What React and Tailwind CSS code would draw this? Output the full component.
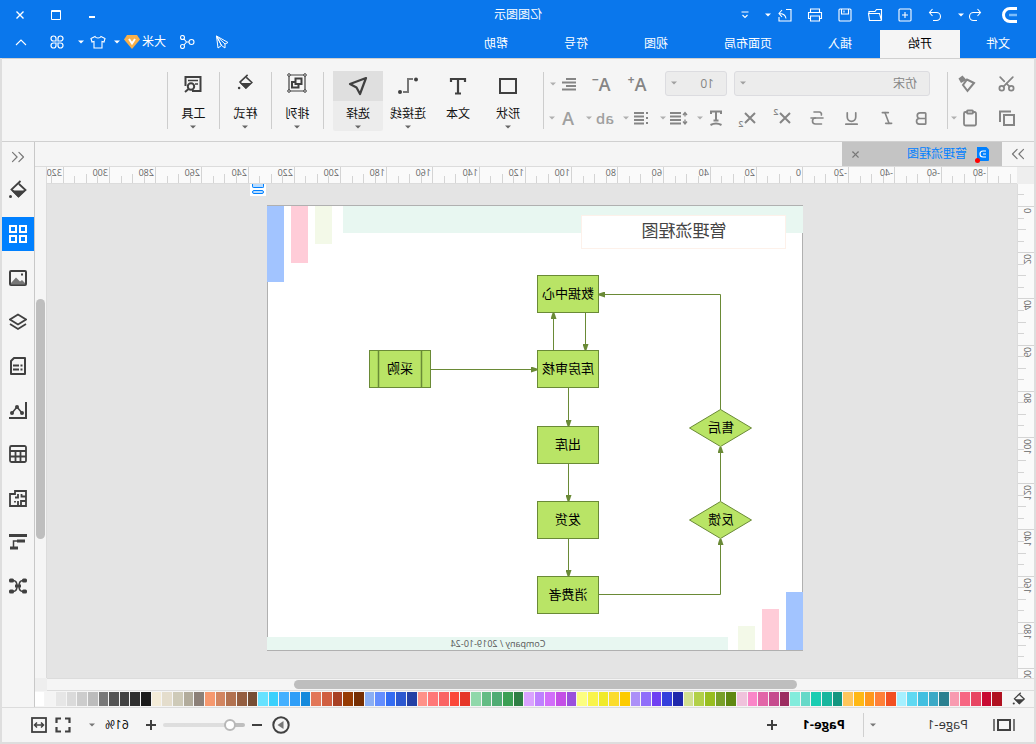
import React, { useState } from 'react';
import {
  Bold,
  Italic,
  Underline,
  Strikethrough,
  Scissors,
  Clipboard,
  ChevronsLeft,
  ChevronsRight,
  X,
} from 'lucide-react';

const menuTabs = ['文件', '开始', '插入', '页面布局', '视图', '符号', '帮助'];

const palette = [
  '#b01120', '#c80a32', '#e84562', '#f76682', '#f89bb0',
  '#2b8090', '#3ba9c6', '#42bfe0', '#60d9f2', '#a6f0ff',
  '#f25022', '#ff8038', '#ff981c', '#ffb814', '#ffc65c',
  '#139680', '#18b69e', '#1acdb2', '#66d9c8', '#82ecdc',
  '#9c2c60', '#c64c8e', '#e266a8', '#fa86c8', '#f0c2dc',
  '#5f8811', '#78a028', '#98be20', '#b2d048', '#d2e090',
  '#1f28ac', '#343fdc', '#7040f2', '#906efa', '#ac90f8',
  '#fdcb00', '#fbdc2c', '#f0ea2a', '#f9f44c', '#fcfe80',
  '#9a50dc', '#c44fe6', '#d26efa', '#bf80ff', '#daa2ff',
  '#2f7f44', '#3ca054', '#50ac74', '#64bc84', '#90d8aa',
  '#e63628', '#fb483a', '#fa6464', '#ff7878', '#ff9188',
  '#2440a4', '#2c58d0', '#346cf2', '#648eff', '#8aaef4',
  '#762e02', '#963a02', '#a84024', '#d05e40', '#e27658',
  '#168adc', '#2e9ef8', '#44b0ff', '#3ad0fc', '#66e2ff',
  '#764e34', '#945e40', '#b27250', '#d28560', '#f6986e',
  '#8c8078', '#b2ac9c', '#cecab8', '#e4ddcc', '#f4ecd8',
  '#1a1a1a', '#2e2e2e', '#424242', '#545454', '#787878',
  '#bcbcbc', '#cccccc', '#dadada', '#e6e6e6', '#f4f4f4', '#ffffff',
];

function Icon({ w = 18, h = 18, sw = 1.5, className = '', children }) {
  return (
    <svg
      width={w}
      height={h}
      viewBox={`0 0 ${w} ${h}`}
      fill="none"
      stroke="currentColor"
      strokeWidth={sw}
      className={`shrink-0 ${className}`}
      aria-hidden="true"
    >
      {children}
    </svg>
  );
}

function Caret({ className = '' }) {
  return (
    <Icon w={6} h={4} className={className}>
      <path d="M0 0.5h6L3 3.5z" fill="currentColor" stroke="none" />
    </Icon>
  );
}

function IconButton({ label, className = '', children, ...rest }) {
  return (
    <button
      type="button"
      aria-label={label}
      className={`flex h-6 w-5 shrink-0 items-center justify-center ${className}`}
      {...rest}
    >
      {children}
    </button>
  );
}

function BucketIcon({ w = 20 }) {
  return (
    <svg width={w} height={w} viewBox="0 0 20 20" fill="none" stroke="currentColor" strokeWidth="1.8" aria-hidden="true">
      <path d="M7.5 1L16.5 9.5L9.5 16.5L2.5 10L9 4" />
      <path d="M3 10.5h13.5l-7 7z" fill="currentColor" stroke="none" />
      <circle cx="17.5" cy="16.5" r="1.5" fill="currentColor" stroke="none" />
    </svg>
  );
}

/* ---------- title bar ---------- */

function QuickAccess() {
  return (
    <div className="flex items-center">
      <IconButton label="撤销">
        <Icon w={14} h={14} sw={1.1}>
          <path d="M4.5 1L1.5 4.5l3 3.5M1.5 4.5h7a4 4 0 0 1 0 8H5" />
        </Icon>
      </IconButton>
      <Caret className="mx-px" />
      <IconButton label="重做" className="ml-3">
        <Icon w={14} h={14} sw={1.1}>
          <path d="M9.5 1l3 3.5-3 3.5M12.5 4.5h-7a4 4 0 0 0 0 8H9" />
        </Icon>
      </IconButton>
      <IconButton label="新建" className="ml-2.5">
        <Icon w={14} h={14} sw={1.1}>
          <rect x="1" y="1" width="12" height="12" rx="1" />
          <path d="M7 4v6M4 7h6" />
        </Icon>
      </IconButton>
      <IconButton label="打开" className="ml-2.5">
        <Icon w={16} h={14} sw={1.1}>
          <path d="M1.5 12.5v-11h5l1.5 2h6v2M1.5 12.5h12l1-7h-11l-2 7" />
        </Icon>
      </IconButton>
      <IconButton label="保存" className="ml-2.5">
        <Icon w={14} h={14} sw={1.1}>
          <rect x="1" y="1" width="12" height="12" rx="1" />
          <path d="M3.5 1v5h7V1M8 2.5v2" />
        </Icon>
      </IconButton>
      <IconButton label="打印" className="ml-2.5">
        <Icon w={16} h={14} sw={1.1}>
          <path d="M3.5 4V1h9v3M3.5 10.5h-2v-6h13v6h-2M3.5 8h9v5h-9z" />
        </Icon>
      </IconButton>
      <IconButton label="导出" className="ml-2.5">
        <Icon w={14} h={14} sw={1.1}>
          <path d="M6 1.5H1V13h12V9M13 5.5C9 5.5 6.5 7 6 10.5M10 2l3 3.5L10 9" />
        </Icon>
      </IconButton>
      <Caret className="ml-1" />
      <IconButton label="更多" className="ml-2.5">
        <Icon w={8} h={8} sw={1.1}>
          <path d="M0.5 1h7M1.5 4L4 6.5 6.5 4" />
        </Icon>
      </IconButton>
    </div>
  );
}

function TitleBar() {
  return (
    <header className="relative bg-[#0a77ec] text-white">
      <div className="flex h-[30px] items-center pr-2.5">
        <Icon w={15} h={16} sw={3} className="mr-[17px] ml-[19px]">
          <path d="M0 1.5h7a6.5 6.5 0 0 1 0 13H0" />
          <path d="M0 8h8" stroke="#7cbcfa" strokeWidth="2.5" />
        </Icon>
        <QuickAccess />
        <div className="ml-auto flex items-center gap-4">
          <IconButton label="最小化">
            <Icon w={10} h={10} sw={2}><path d="M2 7h6" /></Icon>
          </IconButton>
          <IconButton label="最大化">
            <Icon w={10} h={10} sw={1}><path d="M0.5 0.5h9v9h-9zM0.5 1.5h9" /></Icon>
          </IconButton>
          <IconButton label="关闭">
            <Icon w={10} h={10} sw={1.4}><path d="M1.5 1.5l7 7M8.500 1.5l-7 7" /></Icon>
          </IconButton>
        </div>
      </div>
      <h1 className="absolute top-0 left-1/2 -translate-x-1/2 text-xs leading-[30px]">亿图图示</h1>

      <div className="flex h-7 items-stretch text-xs">
        <nav className="flex">
          {menuTabs.map((tab) => (
            <button
              key={tab}
              type="button"
              className={
                tab === '开始'
                  ? 'bg-[#f5f5f5] px-7 text-black'
                  : 'px-7 text-white first:px-[26px]'
              }
            >
              {tab}
            </button>
          ))}
        </nav>
        <div className="mb-1 ml-auto flex items-center pr-[11px]">
          <IconButton label="发送">
            <Icon w={14} h={14} sw={1}>
              <path d="M12.5 1L1 7.5 4 9M12.5 1L11 13 7.5 10.5M12.5 1L4 9v4l3.5-2.5zM12.5 1l-5 9.5" />
            </Icon>
          </IconButton>
          <IconButton label="分享" className="ml-[15px]">
            <Icon w={16} h={14} sw={1.1}>
              <circle cx="3.5" cy="7" r="2.5" />
              <circle cx="12.5" cy="2.5" r="2" />
              <circle cx="12.5" cy="11.5" r="2" />
              <path d="M6 7h2.5l2.5-3M8.5 7l2.5 3" />
            </Icon>
          </IconButton>
          <button type="button" className="ml-[11px] flex items-center gap-0.5">
            大米
            <Icon w={16} h={14}>
              <path d="M3 0h10l3 4.5L8 14 0 4.5z" fill="#f8b04a" stroke="none" />
              <path d="M5 4l3 4.5L11 4" stroke="#fff" strokeWidth="2" />
            </Icon>
          </button>
          <Caret className="ml-1" />
          <IconButton label="皮肤" className="ml-1.5">
            <Icon w={16} h={14} sw={1.1}>
              <path d="M5 1.5L1 3.5 2 7l2-.5V13h8V6.5l2 .5 1-3.5-4-2C10 3.5 6 3.5 5 1.5z" />
            </Icon>
          </IconButton>
          <Caret className="ml-1" />
          <IconButton label="应用" className="ml-[11px]">
            <Icon w={14} h={14} sw={1.2}>
              <path d="M6 6H3.5A2.5 2.5 0 1 1 6 3.5zM8 6V3.5A2.5 2.5 0 1 1 10.5 6zM6 8v2.5A2.5 2.5 0 1 1 3.5 8zM8 8h2.5A2.5 2.5 0 1 1 8 10.5z" />
            </Icon>
          </IconButton>
          <IconButton label="收起功能区" className="ml-4">
            <Icon w={12} h={7} sw={1.1}><path d="M1 6l5-5 5 5" /></Icon>
          </IconButton>
        </div>
      </div>
    </header>
  );
}

/* ---------- ribbon ---------- */

function WithCaret({ label, children }) {
  return (
    <button type="button" aria-label={label} className="flex h-6 w-8 items-center">
      <span className="flex w-5 justify-center">{children}</span>
      <Caret className="ml-[3px] text-[#b0b0b0]" />
    </button>
  );
}

function RibbonSelect({ label, value, options, className, selectClass }) {
  return (
    <div className={`relative ${className}`}>
      <select
        aria-label={label}
        defaultValue={value}
        className={`block h-[25px] w-full appearance-none rounded-[3px] border border-[#dcdce0] bg-[#ececec] text-xs text-[#858585] ${selectClass}`}
      >
        {options.map((o) => (
          <option key={o}>{o}</option>
        ))}
      </select>
      <Caret className="pointer-events-none absolute top-2.5 right-1.5 text-[#a0a0a0]" />
    </div>
  );
}

function BigButton({ label, active, caret = true, className = 'w-[50px]', children }) {
  return (
    <button
      type="button"
      className={`flex h-[60px] shrink-0 flex-col items-center rounded-xs text-xs text-[#111] ${className} ${active ? 'bg-[#ececec]' : ''}`}
    >
      <span className={`flex h-[30px] w-full items-center justify-center text-[#404040] ${active ? 'bg-[#dfdfdf]' : ''}`}>
        {children}
      </span>
      <span className="pt-0.5 leading-[22px]">{label}</span>
      {caret && <Caret className="text-[#666]" />}
    </button>
  );
}

function Divider() {
  return <div className="h-[57px] w-px shrink-0 bg-[#cdcdcd]" />;
}

function Ribbon() {
  return (
    <section className="flex h-[84px] items-center border-y border-[#d0d0d0] bg-[#f5f5f5] pt-px text-[#858585]">
      <div className="flex w-[86px] flex-col gap-2.5 pl-[17px]">
        <div className="flex gap-5">
          <IconButton label="剪切"><Scissors size={19} strokeWidth={2.2} className="-rotate-90" /></IconButton>
          <IconButton label="格式刷">
            <Icon w={18} h={18} sw={2}>
              <path d="M2 8l7-3.5 4 5.500-4.500 6z" />
              <path d="M9.500 5l4-4.500 4 3-2.500 4.500z" fill="currentColor" stroke="none" />
            </Icon>
          </IconButton>
        </div>
        <div className="flex gap-[17px]">
          <IconButton label="复制">
            <Icon w={16} h={16} sw={2}>
              <rect x="1" y="5" width="10" height="10" />
              <path d="M4 1.5h11V12" />
            </Icon>
          </IconButton>
          <div className="flex items-center">
            <IconButton label="粘贴"><Clipboard size={18} strokeWidth={2.4} /></IconButton>
            <Caret className="ml-[3px] text-[#b0b0b0]" />
          </div>
        </div>
      </div>
      <Divider />

      <div className="flex w-[403px] shrink-0 flex-col gap-2.5 pl-[15px]">
        <div className="flex items-center">
          <RibbonSelect label="字体" value="仿宋" options={['仿宋', '宋体', '黑体']} className="ml-0.5 w-[196px]" selectClass="pl-3" />
          <RibbonSelect label="字号" value="10" options={['8', '9', '10', '12']} className="ml-[7px] w-[62px]" selectClass="pl-3" />
          <button type="button" aria-label="增大字号" className="ml-4 flex h-6 w-6 items-center justify-center">
            <span className="text-lg leading-6 font-semibold">A</span>
            <span className="mb-2 text-xs leading-4 font-bold">+</span>
          </button>
          <button type="button" aria-label="减小字号" className="ml-3 flex h-6 w-6 items-center justify-center">
            <span className="text-lg leading-6 font-semibold">A</span>
            <span className="mb-2 text-xs leading-4 font-bold">−</span>
          </button>
          <div className="ml-2.5">
            <WithCaret label="对齐">
              <Icon w={16} h={14} sw={2}><path d="M1 2h10M1 5.5h14M1 9h10M1 12.5h14" /></Icon>
            </WithCaret>
          </div>
        </div>
        <div className="flex items-center">
          <div className="flex gap-[15px]">
            <IconButton label="加粗"><Bold size={17} strokeWidth={2.4} /></IconButton>
            <IconButton label="斜体"><Italic size={16} strokeWidth={2.4} /></IconButton>
            <IconButton label="下划线"><Underline size={17} strokeWidth={2.4} /></IconButton>
            <IconButton label="删除线"><Strikethrough size={18} strokeWidth={2.2} /></IconButton>
            <IconButton label="上标">
              <Icon w={12} h={12} sw={2}><path d="M1 1l10 10M11 1L1 11" /></Icon>
              <span className="mb-3 text-[9px] leading-3 font-semibold">2</span>
            </IconButton>
            <IconButton label="下标">
              <Icon w={12} h={12} sw={2}><path d="M1 1l10 10M11 1L1 11" /></Icon>
              <span className="mt-3 text-[9px] leading-3 font-semibold">2</span>
            </IconButton>
          </div>
          <div className="ml-[11px] flex gap-[5px]">
            <WithCaret label="文字方向">
              <Icon w={14} h={16} sw={2}>
                <path d="M2 4V1.5h10V4M7 1.5v9M4.5 10.5h5M1.5 15q5.5-3 11 0" />
              </Icon>
            </WithCaret>
            <WithCaret label="行距">
              <Icon w={18} h={14} sw={2}>
                <path d="M7 2h11M7 5.5h11M7 9h11M7 12.5h11" />
                <path d="M3 1.5v4M3 8.5v4M1 4l2-2.5L5 4M1 10.5L3 13l2-2.5" strokeWidth="1.3" />
              </Icon>
            </WithCaret>
            <WithCaret label="项目符号">
              <Icon w={15} h={14} sw={2}>
                <path d="M5 2h10M5 5.5h10M5 9h10M5 12.5h10M1 2h2M1 7h2M1 12h2" />
              </Icon>
            </WithCaret>
            <WithCaret label="突出显示">
              <span className="text-[15px] leading-6 font-semibold text-[#a0a0a0]">ab</span>
            </WithCaret>
            <WithCaret label="字体颜色">
              <span className="text-lg leading-6 font-semibold text-[#a0a0a0]">A</span>
            </WithCaret>
          </div>
        </div>
      </div>
      <Divider />

      <div className="flex pr-[9px] pl-2.5">
        <BigButton label="形状">
          <Icon w={18} h={16} sw={2}><rect x="1" y="1" width="16" height="14" /></Icon>
        </BigButton>
        <BigButton label="文本" caret={false}>
          <Icon w={18} h={18} sw={2.2}><path d="M2 5V2h14v3M9 2v14.5M6 16.500h6" /></Icon>
        </BigButton>
        <BigButton label="连接线">
          <Icon w={20} h={18} sw={1.5}>
            <path d="M5 2h5v13h5" stroke="#777" strokeWidth="2" />
            <circle cx="2" cy="2.5" r="2" fill="currentColor" stroke="none" />
            <circle cx="18" cy="15" r="2" fill="currentColor" stroke="none" />
          </Icon>
        </BigButton>
        <BigButton label="选择" active>
          <Icon w={20} h={20} sw={2.2}>
            <path d="M2 2l16 6-6.500 3.500L8 18z" strokeLinejoin="round" />
          </Icon>
        </BigButton>
      </div>
      <Divider />
      <BigButton label="排列" className="w-[51px]">
        <Icon w={20} h={20} sw={1.2} className="mb-1.5">
          <path d="M2 2h16v16H2z" />
          <path d="M5.5 5.500h6V11h-6zM12 9h3v5.500H8.500V12" strokeWidth="2" />
          <g fill="#f5f5f5" strokeWidth="1">
            <circle cx="2" cy="2" r="1.3" />
            <circle cx="18" cy="2" r="1.3" />
            <circle cx="2" cy="18" r="1.3" />
            <circle cx="18" cy="18" r="1.3" />
          </g>
        </Icon>
      </BigButton>
      <Divider />
      <BigButton label="样式" className="w-[51px]">
        <span className="mb-1.5"><BucketIcon w={17} /></span>
      </BigButton>
      <Divider />
      <BigButton label="工具" className="w-[51px]">
        <Icon w={18} h={18} sw={2} className="mb-1">
          <path d="M10 16H1.5V2h15v9" />
          <path d="M4 5.5h10M4 9h3" strokeWidth="1.5" />
          <circle cx="11" cy="11.5" r="3.2" />
          <path d="M13.5 14l3.5 3" />
        </Icon>
      </BigButton>
      <Divider />
    </section>
  );
}

/* ---------- work area ---------- */

const UNIT = 2.31;

function range(from, to, step) {
  const out = [];
  for (let v = from; v <= to; v += step) out.push(v);
  return out;
}

function TopRuler() {
  return (
    <svg className="h-[17px] w-full border-b border-[#dcdcdc] bg-[#fafafa]" fill="#666" fontSize="9" aria-hidden="true">
      {range(-90, 335, 5).map((v) => {
        const x = Math.round(214 + v * UNIT);
        const top = v % 20 === 0 ? 0 : v % 10 === 0 ? 7 : 9;
        return <path key={v} d={`M${x + 0.5} ${top}V17`} stroke="#d4d4d4" />;
      })}
      {range(-80, 320, 20).map((v) => (
        <text key={v} x={Math.round(214 + v * UNIT) + 2} y="9">{v}</text>
      ))}
    </svg>
  );
}

function SideRuler() {
  return (
    <svg className="h-full w-[17px] border-r border-[#dcdcdc] bg-[#fafafa]" fill="#666" fontSize="9" aria-hidden="true">
      {range(-5, 260, 5).map((v) => {
        const y = Math.round(22 + v * UNIT);
        const left = v % 20 === 0 ? 0 : v % 10 === 0 ? 8 : 10;
        return <path key={v} d={`M${left} ${y + 0.5}H17`} stroke="#d4d4d4" />;
      })}
      {range(0, 200, 20).map((v) => (
        <text key={v} textAnchor="end" transform={`translate(10 ${Math.round(22 + v * UNIT) + 2}) rotate(-90)`}>
          {v}
        </text>
      ))}
    </svg>
  );
}

const boxes = [
  { label: '数据中心', x: 204, y: 70 },
  { label: '库房审核', x: 204, y: 145 },
  { label: '出库', x: 204, y: 221 },
  { label: '发货', x: 204, y: 296 },
  { label: '消费者', x: 204, y: 371 },
  { label: '采购', x: 372, y: 145, sub: true },
];

const diamonds = [
  { label: '售后', x: 82, y: 223 },
  { label: '反馈', x: 82, y: 315 },
];

const links = [
  'M217.5 108V145',
  'M249.5 145V108',
  'M372 164.5H266',
  'M234.5 183V221',
  'M234.5 258V296',
  'M234.5 334V371',
  'M204 389.5H82.5V334',
  'M82.5 296V242',
  'M82.5 205V89.5H204',
];

function Flowchart() {
  return (
    <svg width="536" height="446" viewBox="0 0 536 446" className="block bg-white">
      <defs>
        <marker id="arrow" viewBox="0 0 6 6" refX="6" refY="3" markerWidth="6" markerHeight="6" orient="auto" markerUnits="userSpaceOnUse">
          <path d="M0 0L6 2v2L0 6z" fill="#6a8a36" />
        </marker>
      </defs>
      <rect x="0.5" y="0.5" width="535" height="445" fill="none" stroke="#b0b0b0" />
      <rect x="0" y="1" width="460" height="27" fill="#e8f7f1" />
      <rect x="471" y="1" width="17" height="38" fill="#f3f9e8" />
      <rect x="495" y="1" width="17" height="57" fill="#ffccd8" />
      <rect x="519" y="1" width="17" height="76" fill="#a2c4ff" />
      <rect x="75" y="432" width="461" height="13" fill="#e8f7f1" />
      <rect x="0" y="387" width="17" height="58" fill="#a2c4ff" />
      <rect x="24" y="404" width="17" height="41" fill="#ffccd8" />
      <rect x="48" y="421" width="17" height="24" fill="#f3f9e8" />
      <rect x="17.5" y="10.5" width="204" height="33" fill="#fff" stroke="#fdf1ea" />
      <text x="119" y="32" fontSize="17" textAnchor="middle" fill="#444">管理流程图</text>
      <text x="305" y="442" fontSize="9" textAnchor="middle" fill="#555">Company / 2019-10-24</text>

      <g fill="none" stroke="#6a8a36">
        {links.map((d) => (
          <path key={d} d={d} markerEnd="url(#arrow)" />
        ))}
      </g>
      {boxes.map((b) => (
        <g key={b.label}>
          <rect x={b.x + 0.5} y={b.y + 0.5} width="61" height="37" fill="#b9e466" stroke="#6a8a36" />
          {b.sub && <path d={`M${b.x + 9.5} ${b.y}v38M${b.x + 52.5} ${b.y}v38`} stroke="#6a8a36" strokeWidth="1.5" />}
          <text x={b.x + 31} y={b.y + 23} fontSize="13" textAnchor="middle" fill="#000">{b.label}</text>
        </g>
      ))}
      {diamonds.map((n) => (
        <g key={n.label}>
          <path d={`M${n.x - 30.5} ${n.y}l31-18.5 31 18.5-31 18.5z`} fill="#b9e466" stroke="#6a8a36" />
          <text x={n.x} y={n.y + 4} fontSize="13" textAnchor="middle" fill="#000">{n.label}</text>
        </g>
      ))}
    </svg>
  );
}

function DocumentTabs() {
  return (
    <div className="flex h-6 items-stretch">
      <IconButton label="展开左侧面板" className="w-8 text-[#777]"><ChevronsRight size={22} strokeWidth={1.3} /></IconButton>
      <div className="flex w-40 items-center bg-[#c4c4c4]">
        <span className="relative ml-[13px]">
          <svg width="12" height="14" viewBox="0 0 12 14" aria-hidden="true">
            <path d="M2.5 0H12v13a1 1 0 0 1-1 1H1a1 1 0 0 1-1-1V2.5z" fill="#0080ff" />
            <path d="M3 4h3a3 3 0 0 1 0 6H3M3 7h3" fill="none" stroke="#fff" strokeWidth="1.2" />
          </svg>
          <span className="absolute -right-0.5 -bottom-0.5 size-[5px] rounded-full bg-[#f00]" />
        </span>
        <span className="ml-2.5 text-xs text-[#0080ff]">管理流程图</span>
        <IconButton label="关闭文档" className="mr-1 ml-auto text-[#777]"><X size={11} strokeWidth={2.4} /></IconButton>
      </div>
    </div>
  );
}

function Workspace() {
  return (
    <div className="grid min-h-0 flex-1 grid-cols-[17px_1fr_12px] grid-rows-[17px_1fr_13px] border-t border-[#dcdcdc]">
      <div className="bg-[#eeeeee]" />
      <div className="min-w-0 overflow-hidden"><TopRuler /></div>
      <div className="row-span-2 border-l border-[#dcdcdc] px-px pt-[132px]">
        <div className="h-60 rounded-full bg-[#bebebe]" />
      </div>
      <div className="min-h-0 overflow-hidden"><SideRuler /></div>
      <main className="relative min-h-0 min-w-0 overflow-hidden bg-[#e4e4e4] pt-[21px] pl-[214px]">
        <Flowchart />
        <div className="absolute top-0 left-[751px] flex h-3 w-4 flex-col gap-0.5 bg-white px-0.5">
          <span className="h-1 rounded-b-xs border border-t-0 border-[#0080ff] bg-[#b8dcff]" />
          <span className="h-1 rounded-xs border border-[#0080ff] bg-[#b8dcff]" />
        </div>
      </main>
      <div className="col-span-2 border-y border-[#dcdcdc] py-px pl-[237px]">
        <div className="h-[9px] w-[503px] rounded-full bg-[#bebebe]" />
      </div>
      <div className="bg-[#eeeeee]" />
    </div>
  );
}

function Palette() {
  return (
    <div className="flex h-4 items-center pl-2">
      <span className="mr-2.5 text-[#404040]"><BucketIcon w={14} /></span>
      <div className="flex h-3.5 flex-1 gap-px">
        {palette.map((color) => (
          <button key={color} type="button" aria-label={color} className="flex-1" style={{ backgroundColor: color }} />
        ))}
      </div>
    </div>
  );
}

const panels = [
  { name: '样式', icon: <BucketIcon w={20} /> },
  {
    name: '符号库',
    icon: (
      <Icon sw={2}>
        <path d="M1 1h6v6H1zM11 1h6v6h-6zM1 11h6v6H1zM11 11h6v6h-6z" />
      </Icon>
    ),
  },
  {
    name: '图片',
    icon: (
      <Icon sw={2}>
        <rect x="1" y="2" width="16" height="14" rx="1" />
        <path d="M2 14l3-3 2 1.5 4-4 5 5.5v1.5H2z" fill="#777" stroke="none" />
        <path d="M4 5.5h2" />
      </Icon>
    ),
  },
  {
    name: '图层',
    icon: (
      <Icon sw={1.8}>
        <path d="M9 1.500l8 5-8 5-8-5zM1 11l8 5 8-5" />
      </Icon>
    ),
  },
  {
    name: '文档',
    icon: (
      <Icon sw={2}>
        <path d="M2 1h11l3 3v13H2z" strokeLinejoin="round" />
        <path d="M4.500 8.500h2M8 8.500h6M4.500 12.500h2M8 12.500h6" strokeWidth="1.8" />
      </Icon>
    ),
  },
  {
    name: '图表',
    icon: (
      <Icon sw={1.5}>
        <path d="M1 1v16h17" strokeWidth="2" />
        <path d="M5 12l5-6 5 6" />
        <g fill="currentColor" stroke="none">
          <circle cx="5" cy="12" r="2" />
          <circle cx="10" cy="6" r="2" />
          <circle cx="15" cy="12" r="2" />
        </g>
      </Icon>
    ),
  },
  {
    name: '表格',
    icon: (
      <Icon sw={1.8}>
        <rect x="1" y="1" width="16" height="16" rx="1.5" />
        <path d="M1 6h16M1 11.500h16M6.500 6v11M11.500 6v11" />
      </Icon>
    ),
  },
  {
    name: '平面图',
    icon: (
      <Icon sw={1.8}>
        <path d="M1 2h11v3h5v12H1zM1 7.500h4.500V5M1 12h5v5M9 5v3.500h3M9 17v-5M12 12v1.500" />
      </Icon>
    ),
  },
  {
    name: '甘特图',
    icon: (
      <Icon sw={3}>
        <path d="M0 2.500h18M2 8h8M9 15h8" />
        <path d="M10 8h3.500v6" strokeWidth="1.5" />
      </Icon>
    ),
  },
  {
    name: '思维导图',
    icon: (
      <Icon sw={1.5}>
        <path d="M4 3.500q4 0 4 5.500t-4 5.500M14 3.500q-4 0-4 5.500t4 5.500" />
        <g fill="currentColor" stroke="none">
          <rect x="0" y="1.500" width="5" height="4" rx="1.5" />
          <rect x="13" y="1.500" width="5" height="4" rx="1.5" />
          <rect x="0" y="12.500" width="5" height="4" rx="1.5" />
          <rect x="13" y="12.500" width="5" height="4" rx="1.5" />
          <rect x="6" y="7.500" width="6" height="3" />
        </g>
      </Icon>
    ),
  },
];

function SidePanel() {
  const [active, setActive] = useState('符号库');

  return (
    <aside className="flex w-[33px] shrink-0 flex-col border-l border-[#c8c8c8] text-[#404040]">
      <button type="button" aria-label="展开右侧面板" className="flex h-[26px] items-center justify-center pt-1 text-[#777]">
        <ChevronsLeft size={22} strokeWidth={1.3} />
      </button>
      {panels.map((panel) => (
        <button
          key={panel.name}
          type="button"
          aria-label={panel.name}
          onClick={() => setActive(panel.name)}
          className="flex h-11 items-center"
        >
          <span
            className={`flex h-[34px] w-full items-center justify-center ${
              active === panel.name ? 'bg-[#0080ff] text-white' : ''
            }`}
          >
            {panel.icon}
          </span>
        </button>
      ))}
    </aside>
  );
}

function StatusBar() {
  const [zoom, setZoom] = useState(61);

  return (
    <footer className="flex h-[35px] items-center border-t border-[#dcdcdc] text-[#404040]">
      <IconButton label="页面视图" className="ml-5">
        <Icon w={22} h={14} sw={2}>
          <rect x="5" y="2" width="12" height="10" />
          <path d="M1 1v12M21 1v12" stroke="#777" />
        </Icon>
      </IconButton>
      <button type="button" className="ml-[26px] flex w-[98px] items-center justify-between text-[13px] text-[#333]">
        Page-1
        <Caret className="text-[#777]" />
      </button>
      <div className="ml-1.5 h-6 w-px bg-[#d0d0d0]" />
      <button type="button" className="ml-[18px] text-[13px] font-bold text-black">Page-1</button>
      <IconButton label="添加页面" className="ml-5">
        <Icon w={10} h={10} sw={2}><path d="M5 0v10M0 5h10" /></Icon>
      </IconButton>

      <div className="ml-auto flex items-center">
        <IconButton label="播放">
          <Icon sw={2}>
            <circle cx="9" cy="9" r="7.700" />
            <path d="M6.500 5v8l6-4z" fill="#777" stroke="none" />
          </Icon>
        </IconButton>
        <IconButton label="缩小" className="ml-1">
          <Icon w={10} h={10} sw={2}><path d="M0 5h10" /></Icon>
        </IconButton>
        <input
          type="range"
          aria-label="缩放"
          min="10"
          max="400"
          value={zoom}
          onChange={(e) => setZoom(Number(e.target.value))}
          className="mx-0.5 h-1 w-[82px] appearance-none rounded-full bg-linear-to-r from-[#bebebe] from-15% to-[#dedede] to-15% [&::-webkit-slider-thumb]:size-3 [&::-webkit-slider-thumb]:appearance-none [&::-webkit-slider-thumb]:rounded-full [&::-webkit-slider-thumb]:border-2 [&::-webkit-slider-thumb]:border-[#b8b8b8] [&::-webkit-slider-thumb]:bg-white"
        />
        <IconButton label="放大">
          <Icon w={10} h={10} sw={2}><path d="M5 0v10M0 5h10" /></Icon>
        </IconButton>
        <button type="button" className="ml-3 flex items-center gap-2.5 text-xs text-black">
          {zoom}%
          <Caret className="text-[#777]" />
        </button>
        <IconButton label="全屏" className="ml-4">
          <Icon w={16} h={16} sw={2.2}><path d="M1.500 6V1.500H6M10 1.500h4.500V6M14.500 10v4.500H10M6 14.500H1.500V10" /></Icon>
        </IconButton>
        <IconButton label="适合宽度" className="mr-[27px] ml-1">
          <Icon w={16} h={16} sw={1.8}>
            <rect x="1" y="1" width="14" height="14" />
            <path d="M3.500 8h9M6 5.500L3.500 8 6 10.500M10 5.500L12.500 8 10 10.500" strokeWidth="1.5" />
          </Icon>
        </IconButton>
      </div>
    </footer>
  );
}

function App() {
  return (
    <div className="flex h-screen -scale-x-100 flex-col overflow-hidden bg-[#f5f5f5] font-['Open_Sans','Noto_Sans_CJK_SC',sans-serif]">
      <TitleBar />
      <div className="flex min-h-0 flex-1 flex-col border-x-2 border-b-2 border-[#dedede]">
        <Ribbon />
        <div className="flex min-h-0 flex-1">
          <div className="flex min-w-0 flex-1 flex-col">
            <DocumentTabs />
            <Workspace />
            <Palette />
          </div>
          <SidePanel />
        </div>
        <StatusBar />
      </div>
    </div>
  );
}

export default App;
